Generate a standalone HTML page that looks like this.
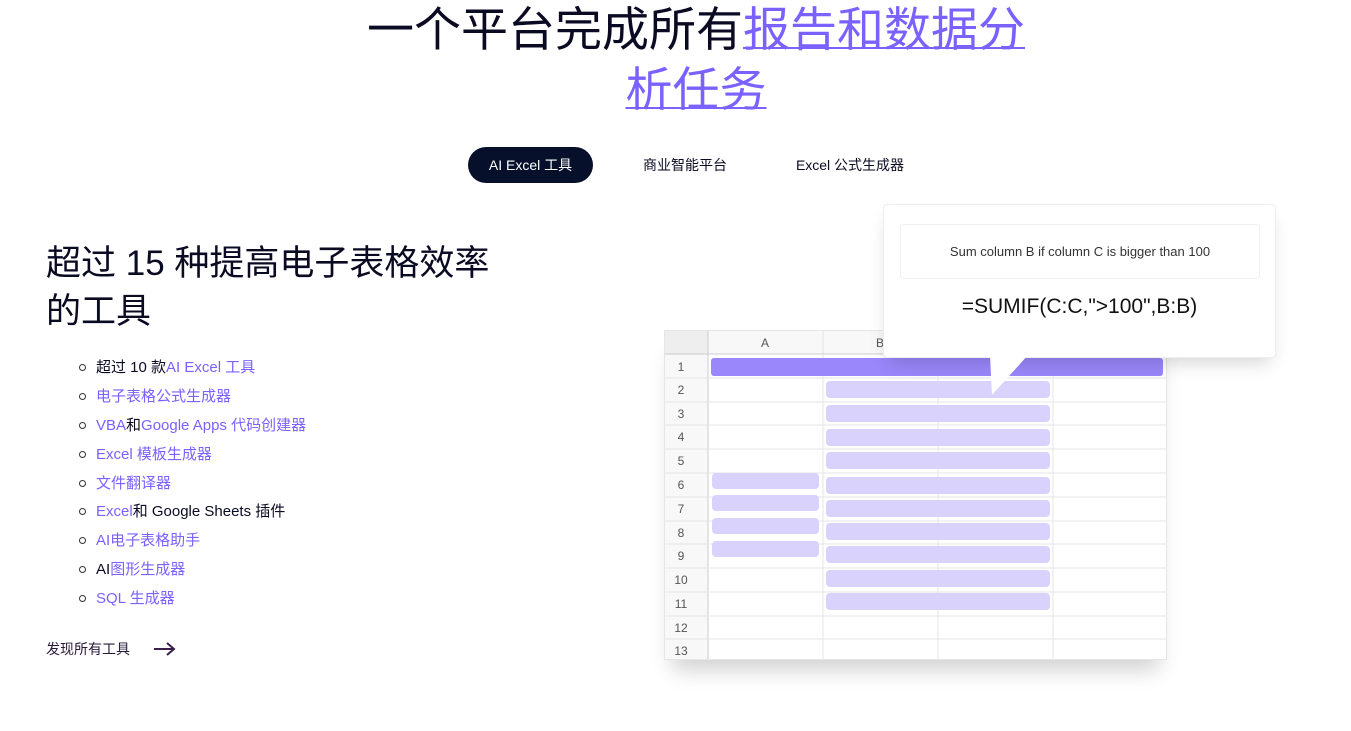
<!DOCTYPE html><html><head><meta charset="utf-8"><style>
body{margin:0;width:1351px;height:731px;overflow:hidden;background:#fff;font-family:"Liberation Sans","Noto Sans CJK SC",sans-serif;position:relative;color:#0a0a23}
.a{position:absolute}
h1{position:absolute;left:0;width:1392px;top:0;margin:0;text-align:center;font-weight:400;font-size:47px;line-height:60px;color:#0a0a23}
h1 u{color:#7b61ff;text-decoration-thickness:2px}
.pill{position:absolute;top:147px;height:36px;line-height:36px;font-size:14px;text-align:center}
ul{position:absolute;left:76px;top:356px;margin:0;padding:0;list-style:none;font-size:15px}
li{height:28.9px;line-height:24px;position:relative;padding-left:20px}
li:before{content:"";position:absolute;left:3px;top:8px;width:5px;height:5px;border:1.5px solid #333;border-radius:50%}
.p{color:#7b61ff}
.bar{position:absolute;background:#d9d2fd;border-radius:4px;height:16px}
</style></head><body>
<h1>一个平台完成所有<u>报告和数据分<br>析任务</u></h1>
<div class="pill" style="left:468px;width:125px;background:#06102b;color:#fff;border-radius:18px">AI Excel 工具</div>
<div class="pill" style="left:630px;width:110px">商业智能平台</div>
<div class="pill" style="left:785px;width:130px">Excel 公式生成器</div>
<div class="a" style="left:46px;top:240px;font-size:35px;line-height:48px;width:480px">超过 15 种提高电子表格效率<br>的工具</div>
<ul>
<li>超过 10 款<span class="p">AI Excel 工具</span></li>
<li class="p">电子表格公式生成器</li>
<li><span class="p">VBA</span>和<span class="p">Google Apps 代码创建器</span></li>
<li class="p">Excel 模板生成器</li>
<li class="p">文件翻译器</li>
<li><span class="p">Excel</span>和 Google Sheets 插件</li>
<li class="p">AI电子表格助手</li>
<li>AI<span class="p">图形生成器</span></li>
<li class="p">SQL 生成器</li>
</ul>
<div class="a" style="left:46px;top:639px;font-size:14px;color:#2a1a3a">发现所有工具</div>
<svg class="a" style="left:153px;top:641px" width="23" height="16"><path d="M1 8H21M14 2L21 8L14 14" stroke="#3a1f4a" stroke-width="2" fill="none"/></svg>
<!-- sheet -->
<div class="a" style="left:664px;top:330px;width:501px;height:328px;border:1px solid #e6e6e6;box-shadow:0 18px 20px -8px rgba(0,0,0,.18);background:#fff">
<svg width="501" height="328" style="position:absolute;left:0;top:0">
<rect x="0" y="0" width="501" height="23" fill="#f8f8f8"/><rect x="0" y="0" width="43" height="328" fill="#f8f8f8"/>
<rect x="0" y="0" width="43" height="23" fill="#eee"/>
<g stroke="#e4e4e4">
<line x1="43" y1="0" x2="43" y2="328" stroke="#ccc"/><line x1="158" y1="0" x2="158" y2="328"/><line x1="273" y1="0" x2="273" y2="328"/><line x1="388" y1="0" x2="388" y2="328"/>
<line x1="0" y1="23" x2="501" y2="23" stroke="#ccc"/>
<line x1="0" y1="47" x2="501" y2="47"/><line x1="0" y1="71" x2="501" y2="71"/><line x1="0" y1="94" x2="501" y2="94"/><line x1="0" y1="118" x2="501" y2="118"/><line x1="0" y1="142" x2="501" y2="142"/><line x1="0" y1="166" x2="501" y2="166"/><line x1="0" y1="190" x2="501" y2="190"/><line x1="0" y1="213" x2="501" y2="213"/><line x1="0" y1="237" x2="501" y2="237"/><line x1="0" y1="261" x2="501" y2="261"/><line x1="0" y1="285" x2="501" y2="285"/><line x1="0" y1="308" x2="501" y2="308"/>
</g>
<g font-size="12" fill="#555" font-family="Liberation Sans" text-anchor="middle">
<text x="100" y="16">A</text><text x="215" y="16">B</text>
<text x="16" y="40">1</text><text x="16" y="63">2</text><text x="16" y="87">3</text><text x="16" y="110">4</text><text x="16" y="134">5</text><text x="16" y="158">6</text><text x="16" y="182">7</text><text x="16" y="206">8</text><text x="16" y="229">9</text><text x="16" y="253">10</text><text x="16" y="277">11</text><text x="16" y="301">12</text><text x="16" y="324">13</text>
</g>
<rect x="46" y="27" width="452" height="18" rx="3" fill="#9a87fb"/>
<g fill="#d9d2fd">
<rect x="161" y="50" width="224" height="17" rx="4"/><rect x="161" y="74" width="224" height="17" rx="4"/><rect x="161" y="98" width="224" height="17" rx="4"/><rect x="161" y="121" width="224" height="17" rx="4"/><rect x="161" y="146" width="224" height="17" rx="4"/><rect x="161" y="169" width="224" height="17" rx="4"/><rect x="161" y="192" width="224" height="17" rx="4"/><rect x="161" y="215" width="224" height="17" rx="4"/><rect x="161" y="239" width="224" height="17" rx="4"/><rect x="161" y="262" width="224" height="17" rx="4"/>
<rect x="47" y="142" width="107" height="16" rx="4"/><rect x="47" y="164" width="107" height="16" rx="4"/><rect x="47" y="187" width="107" height="16" rx="4"/><rect x="47" y="210" width="107" height="16" rx="4"/>
</g>
</svg></div>
<!-- popup -->
<div class="a" style="left:883px;top:204px;width:391px;height:152px;background:#fff;border:1px solid #eee;border-radius:4px;box-shadow:0 10px 18px -6px rgba(0,0,0,.18)">
<div class="a" style="left:16px;top:19px;width:358px;height:53px;border:1px solid #f0f0f0;border-radius:4px;text-align:center;line-height:53px;font-size:13px;color:#333">Sum column B if column C is bigger than 100</div>
<div class="a" style="left:0;top:90px;width:391px;text-align:center;font-size:21px;color:#111">=SUMIF(C:C,"&gt;100",B:B)</div>
</div>
<svg class="a" style="left:990px;top:355px" width="40" height="42"><path d="M0 0H38L2 40Z" fill="#fff"/></svg>
</body></html>
